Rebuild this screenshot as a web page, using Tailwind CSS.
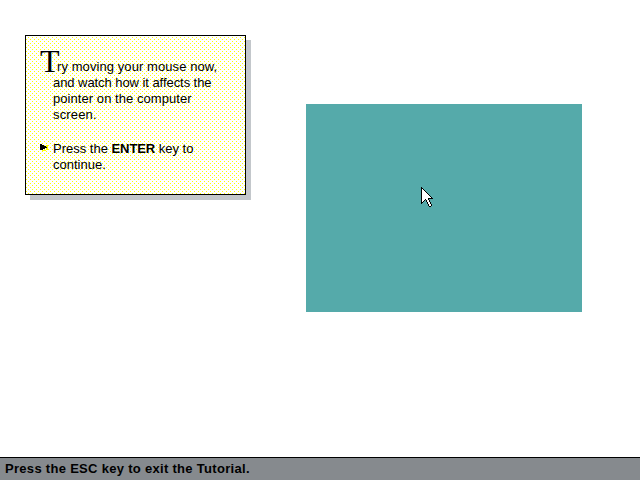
<!DOCTYPE html>
<html lang="en">
<head>
<meta charset="utf-8">
<title>Tutorial</title>
<script src="https://cdn.jsdelivr.net/npm/@tailwindcss/browser@4"></script>
</head>
<body class="w-[640px] h-[480px] overflow-hidden bg-white text-black font-['Liberation_Sans',Arial,sans-serif]">
<div class="flex h-full flex-col">
  <main class="flex flex-1 items-start pl-[25px] pt-[35px]">
    <section class="relative h-[160px] w-[221px] shrink-0 border border-black bg-white shadow-[5px_5px_0_0_#c3c7cb] pl-[14px] pt-[9px]">
      <svg class="absolute inset-0 h-full w-full" shape-rendering="crispEdges" aria-hidden="true">
        <defs><pattern id="dots" width="4" height="4" patternUnits="userSpaceOnUse"><path fill="#ffff00" d="M2 1h1v1h-1zM0 3h1v1h-1z"/></pattern></defs>
        <rect width="100%" height="100%" fill="url(#dots)"/>
      </svg>
      <div class="relative text-[13px] leading-4 whitespace-nowrap">
        <p class="flex h-[30px] items-end"><span class="w-[17px] h-[30px] font-['Liberation_Serif',serif] text-[32px] leading-[32px]">T</span><span class="tracking-[0.08px]">ry moving your mouse now,</span></p>
        <p class="pl-[13px]"><span class="tracking-[-0.06px]">and watch how it affects the</span><br><span class="tracking-[0.06px]">pointer on the computer</span><br><span class="tracking-[0.15px]">screen.</span></p>
        <div class="mt-[18px] flex">
          <svg class="mt-[3px] h-[7px] w-[13px]" viewBox="0 0 13 7" shape-rendering="crispEdges"><path fill="#ffff00" d="M6 1h2v5h-2zM2 6h4v1h-4z"/><path d="M0 0h2v1h2v1h2v1h1v1h-2v1h-2v1h-3z"/></svg>
          <p><span>Press the <b class="tracking-[-0.1px]">ENTER</b> key to</span><br><span>continue.</span></p>
        </div>
      </div>
    </section>
    <div class="relative ml-[60px] mt-[69px] h-[208px] w-[276px] bg-[#55aaaa]">
      <svg class="absolute left-[115px] top-[83px] h-[20px] w-[12px]" viewBox="0 0 12 20" shape-rendering="crispEdges">
        <path d="M0 0h1v1h1v1h1v1h1v1h1v1h1v1h1v1h1v1h1v1h1v1h1v1h1v1h-4v1h1v2h1v2h1v2h-1v1h-2v-1h-1v-2h-1v-2h-1v-2h-1v1h-1v1h-1v1h-1v1h-1z"/>
        <path fill="#fff" d="M1 2h1v1h1v1h1v1h1v1h1v1h1v1h1v1h1v1h1v1h-3v2h1v2h1v2h1v2h-2v-2h-1v-2h-1v-2h-1v-1h-1v1h-1v1h-1v1h-1z"/>
      </svg>
    </div>
  </main>
  <footer class="flex h-[23px] items-center border-t border-black bg-[#868a8e] pl-[5px] text-[13px] font-bold tracking-[0.3px] whitespace-nowrap"><span>Press the ESC key to exit the Tutorial.</span></footer>
</div>
</body>
</html>
